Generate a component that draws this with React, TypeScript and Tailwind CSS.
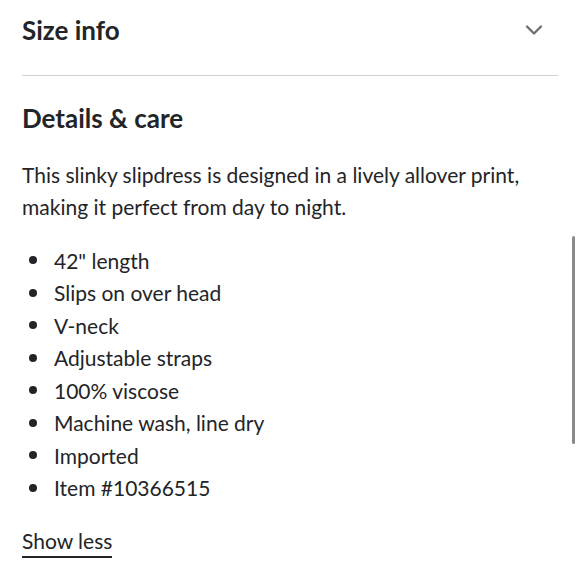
import { ChevronDown } from "lucide-react";

const bullets = [
  '42" length',
  "Slips on over head",
  "V-neck",
  "Adjustable straps",
  "100% viscose",
  "Machine wash, line dry",
  "Imported",
  "Item #10366515",
];

export default function App() {
  return (
    <div className="relative h-[580px] w-[580px] overflow-hidden bg-white text-[#232427] [font-family:Lato,'Noto_Sans',sans-serif]">
      <div className="px-[22px]">
        <div className="flex h-[60px] items-center justify-between">
          <h2 className="text-[26px] font-bold leading-none">Size info</h2>
          <ChevronDown className="mr-[10px] h-7 w-7 text-[#6d6e71]" strokeWidth={2} />
        </div>
        <div className="mt-[15px] h-px w-[536px] bg-[#d0d3d4]" />
        <h2 className="mt-[27px] text-[26px] font-bold leading-[30px]">Details &amp; care</h2>
        <p className="mt-[26px] text-[21px] leading-[32px]">
          This slinky slipdress is designed in a lively allover print,
          <br />
          making it perfect from day to night.
        </p>
        <ul className="mt-[21px]">
          {bullets.map((b) => (
            <li key={b} className="flex h-[32.5px] items-center text-[21px]">
              <span className="ml-[7px] mr-[17px] h-[8px] w-[8px] rounded-full bg-[#232427]" />
              {b}
            </li>
          ))}
        </ul>
        <button className="mt-[24px] border-b-2 border-[#232427] pb-[2px] text-[21px] leading-[26px]">
          Show less
        </button>
      </div>
      <div className="absolute left-[572px] top-[236px] h-[208px] w-[3px] rounded-full bg-[#8a8a8a]" />
    </div>
  );
}
